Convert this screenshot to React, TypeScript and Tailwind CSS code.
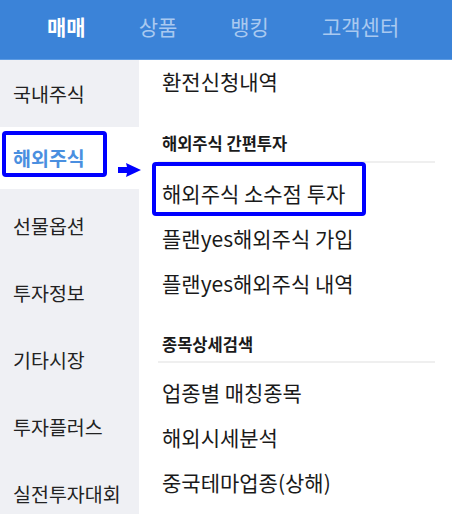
const tabs = ["매매", "상품", "뱅킹", "고객센터"];

const sideItems = ["국내주식", "해외주식", "선물옵션", "투자정보", "기타시장", "투자플러스", "실전투자대회"];

function Highlight({ className }: { className: string }) {
  return <div className={`pointer-events-none absolute rounded-[4px] border-4 border-[#0000ff] ${className}`} />;
}

function SectionTitle({ title, className }: { title: string; className: string }) {
  return (
    <div className={`flex items-end border-b-2 border-[#efefef] pl-[4px] ${className}`}>
      <span className="text-[16.5px] font-bold leading-[22px] text-[#1a1a1a]">{title}</span>
    </div>
  );
}

function MenuRow({ label, children }: { label: string; children?: React.ReactNode }) {
  return (
    <div className="relative flex h-[45px] items-center pl-[4px] text-[21px] text-[#1a1a1a]">
      {label}
      {children}
    </div>
  );
}

export default function App() {
  return (
    <div
      className="relative h-[514px] w-[452px] overflow-hidden bg-white"
      style={{ fontFamily: '"Noto Sans CJK KR", "Noto Sans", sans-serif' }}
    >
      {/* HEADER TABS */}
      <div className="flex h-[60px] items-center gap-[53px] border-b border-[#5e9ce3] bg-[#3b83d8] pb-[5px] pl-[47px]">
        {tabs.map((t, i) => (
          <span
            key={t}
            className={i === 0 ? "text-[21px] font-bold text-white" : "text-[21px] text-[#a9c9f0]"}
          >
            {t}
          </span>
        ))}
      </div>

      <div className="flex">
        {/* SIDEBAR */}
        <div className="flex h-[454px] w-[139px] flex-col overflow-hidden bg-[#eff0f4]">
          {sideItems.map((s, i) => {
            if (i === 1) {
              return (
                <div key={s} className="relative flex h-[62px] shrink-0 items-center bg-white pl-[13px] text-[19.5px] font-bold text-[#4a8fe0]">
                  {s}
                  <Highlight className="left-[2px] top-[4px] h-[46px] w-[105px]" />
                </div>
              );
            }
            return (
              <div
                key={s}
                className={`flex h-[67px] shrink-0 items-center pl-[13px] text-[19.5px] text-[#222] ${i === 0 ? "pt-0" : "pt-[7px]"}`}
              >
                {s}
              </div>
            );
          })}
        </div>

        {/* MENU PANEL */}
        <div className="flex-1 pl-[19px] pr-[17px]">
          <div className="flex h-[44px] items-center pl-[4px] text-[21px] text-[#1a1a1a]">환전신청내역</div>

          <SectionTitle title="해외주식 간편투자" className="h-[59px] pb-[7px]" />
          <div className="h-[8px]" />
          <MenuRow label="해외주식 소수점 투자">
            <Highlight className="left-[-6px] top-[-9px] h-[54px] w-[214px]" />
          </MenuRow>
          <MenuRow label="플랜yes해외주식 가입" />
          <MenuRow label="플랜yes해외주식 내역" />

          <SectionTitle title="종목상세검색" className="h-[57px] pb-[6px]" />
          <div className="h-[7px]" />
          <MenuRow label="업종별 매칭종목" />
          <MenuRow label="해외시세분석" />
          <MenuRow label="중국테마업종(상해)" />
        </div>
      </div>

      {/* ARROW */}
      <svg className="absolute left-[118px] top-[163px]" width="24" height="14" viewBox="0 0 24 14">
        <polygon points="0,4 9,4 8,0 23,7 8,14 9,10 0,10" fill="#0000ff" />
      </svg>
    </div>
  );
}
